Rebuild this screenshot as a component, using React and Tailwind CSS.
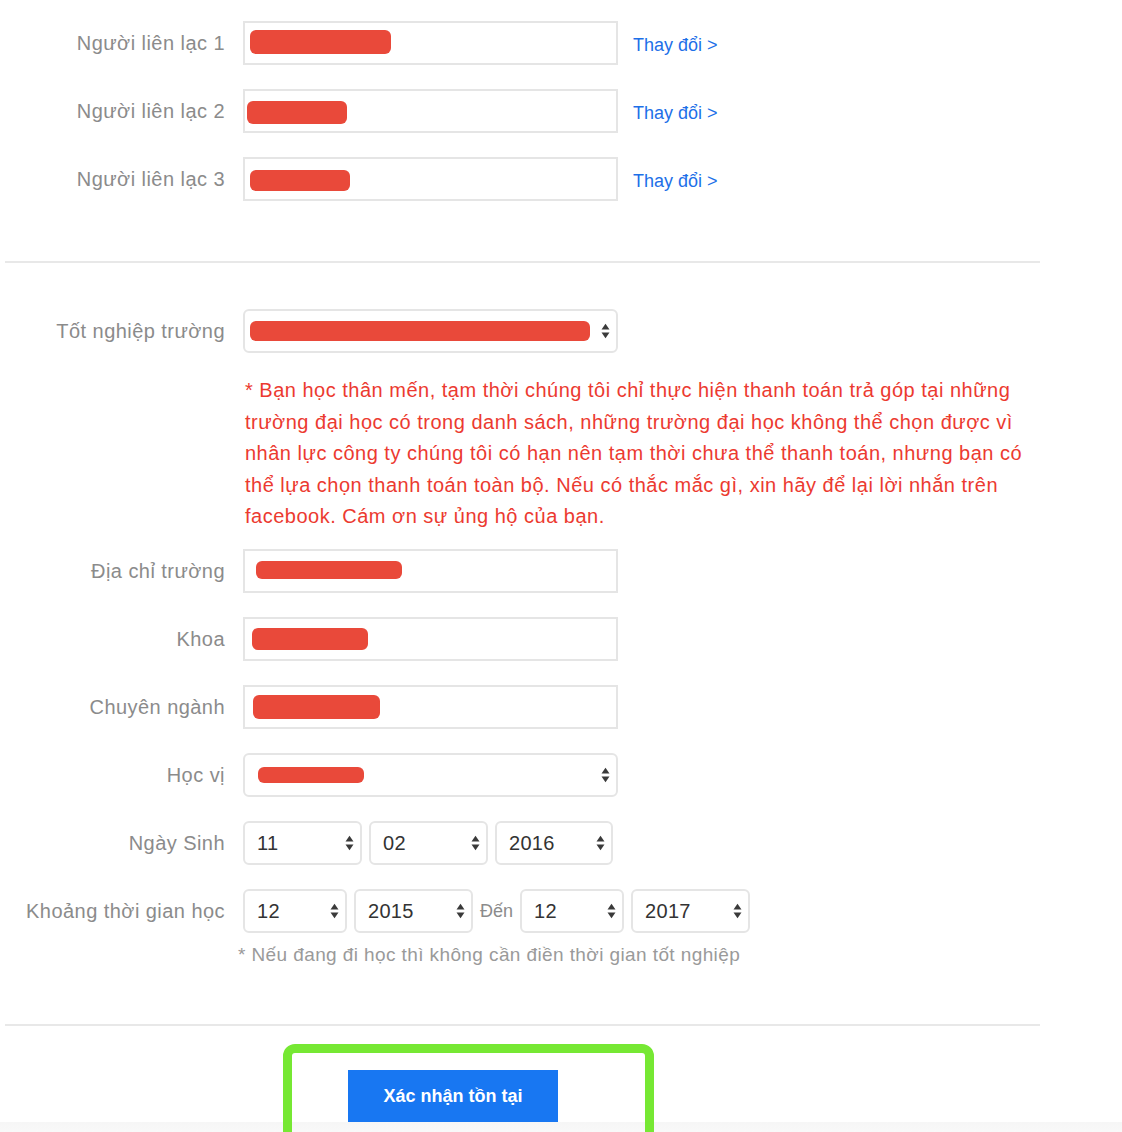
import React from "react";

const FONT = { fontFamily: '"Liberation Sans", Arial, Helvetica, sans-serif' };

function Arrows() {
  return (
    <svg width="9" height="16" viewBox="0 0 9 16" className="shrink-0">
      <path d="M0.5 6.5 L4.5 0.8 L8.5 6.5 Z" fill="#3a3a3a" />
      <path d="M0.5 9.5 L4.5 15.2 L8.5 9.5 Z" fill="#3a3a3a" />
    </svg>
  );
}

function Blob({ w, h = 22, ml = 6, mt = 0 }) {
  return (
    <div
      className="rounded-[6px] bg-[#e9493a]"
      style={{ width: w, height: h, marginLeft: ml, marginTop: mt }}
    />
  );
}

function Label({ children }) {
  return (
    <div className="w-[225px] shrink-0 text-right text-[20px] tracking-[0.45px] text-[#8b8b8b] leading-none whitespace-nowrap">
      {children}
    </div>
  );
}

function Row({ label, children }) {
  return (
    <div className="flex items-center h-[44px]">
      <Label>{label}</Label>
      <div className="ml-[18px] flex items-center h-full">{children}</div>
    </div>
  );
}

function InputBox({ children }) {
  return (
    <div className="w-[375px] h-[44px] border-2 border-[#e5e5e5] bg-white flex items-center">
      {children}
    </div>
  );
}

function SelectBox({ children, w = "w-[375px]" }) {
  return (
    <div
      className={`${w} h-[44px] border-2 border-[#e5e5e5] rounded-[6px] bg-white flex items-center justify-between pr-[6px]`}
    >
      <div className="flex items-center">{children}</div>
      <Arrows />
    </div>
  );
}

function SmallSelect({ value, w }) {
  return (
    <div
      className={`${w} h-[44px] border-2 border-[#e5e5e5] rounded-[6px] bg-white flex items-center justify-between pl-[12px] pr-[6px]`}
    >
      <span className="text-[20px] tracking-[0.3px] text-[#333333] leading-none">{value}</span>
      <Arrows />
    </div>
  );
}

function Link() {
  return (
    <span className="ml-[15px] mt-[4px] text-[18px] text-[#1d6fe8] leading-none whitespace-nowrap">
      Thay đổi &gt;
    </span>
  );
}

export default function App() {
  return (
    <div className="w-[1122px] h-[1132px] overflow-hidden bg-white relative" style={FONT}>
      <div className="pt-[21px] flex flex-col gap-[24px]">
        <Row label="Người liên lạc 1">
          <InputBox>
            <Blob w={141} h={24} ml={5} mt={-2} />
          </InputBox>
          <Link />
        </Row>
        <Row label="Người liên lạc 2">
          <InputBox>
            <Blob w={100} h={23} ml={2} mt={2} />
          </InputBox>
          <Link />
        </Row>
        <Row label="Người liên lạc 3">
          <InputBox>
            <Blob w={100} h={21} ml={5} mt={2} />
          </InputBox>
          <Link />
        </Row>
      </div>

      <div className="mt-[60px] ml-[5px] w-[1035px] h-[2px] bg-[#e8e8e8]" />

      <div className="mt-[46px]">
        <Row label="Tốt nghiệp trường">
          <SelectBox>
            <Blob w={340} h={20} ml={5} mt={0} />
          </SelectBox>
        </Row>
      </div>

      <div className="ml-[245px] mt-[22px] text-[20px] tracking-[0.5px] leading-[31.5px] text-[#ec3a30] whitespace-nowrap">
        <div>* Bạn học thân mến, tạm thời chúng tôi chỉ thực hiện thanh toán trả góp tại những</div>
        <div>trường đại học có trong danh sách, những trường đại học không thể chọn được vì</div>
        <div>nhân lực công ty chúng tôi có hạn nên tạm thời chưa thể thanh toán, nhưng bạn có</div>
        <div>thể lựa chọn thanh toán toàn bộ. Nếu có thắc mắc gì, xin hãy để lại lời nhắn trên</div>
        <div>facebook. Cám ơn sự ủng hộ của bạn.</div>
      </div>

      <div className="mt-[16px] flex flex-col gap-[24px]">
        <Row label="Địa chỉ trường">
          <InputBox>
            <Blob w={146} h={18} ml={11} mt={-2} />
          </InputBox>
        </Row>
        <Row label="Khoa">
          <InputBox>
            <Blob w={116} h={22} ml={7} mt={1} />
          </InputBox>
        </Row>
        <Row label="Chuyên ngành">
          <InputBox>
            <Blob w={127} h={24} ml={8} mt={0} />
          </InputBox>
        </Row>
        <Row label="Học vị">
          <SelectBox>
            <Blob w={106} h={16} ml={13} mt={0} />
          </SelectBox>
        </Row>
        <Row label="Ngày Sinh">
          <div className="flex items-center gap-[7px]">
            <SmallSelect value="11" w="w-[119px]" />
            <SmallSelect value="02" w="w-[119px]" />
            <SmallSelect value="2016" w="w-[118px]" />
          </div>
        </Row>
        <Row label="Khoảng thời gian học">
          <div className="flex items-center">
            <SmallSelect value="12" w="w-[104px]" />
            <div className="ml-[7px]">
              <SmallSelect value="2015" w="w-[119px]" />
            </div>
            <span className="mx-[7px] text-[18px] text-[#8b8b8b] leading-none">Đến</span>
            <SmallSelect value="12" w="w-[104px]" />
            <div className="ml-[7px]">
              <SmallSelect value="2017" w="w-[119px]" />
            </div>
          </div>
        </Row>
      </div>

      <div className="ml-[238px] mt-[11px] text-[19px] tracking-[0.4px] leading-[22px] text-[#9a9a9a] whitespace-nowrap">
        * Nếu đang đi học thì không cần điền thời gian tốt nghiệp
      </div>

      <div className="relative">
        <div className="mt-[58px] ml-[5px] w-[1035px] h-[2px] bg-[#e8e8e8]" />
        <div className="pt-[44px] pl-[348px]">
          <div className="w-[210px] h-[52px] bg-[#1877f2] flex items-center justify-center text-white text-[18px] font-bold leading-none">
            Xác nhận tồn tại
          </div>
        </div>
        <div className="h-[20px] bg-gradient-to-b from-[#f6f6f6] to-[#fbfbfb]" />
        <div className="absolute left-[283px] top-[20px] w-[371px] h-[120px] border-[9px] border-[#76e833] rounded-[12px] pointer-events-none" />
      </div>
    </div>
  );
}
